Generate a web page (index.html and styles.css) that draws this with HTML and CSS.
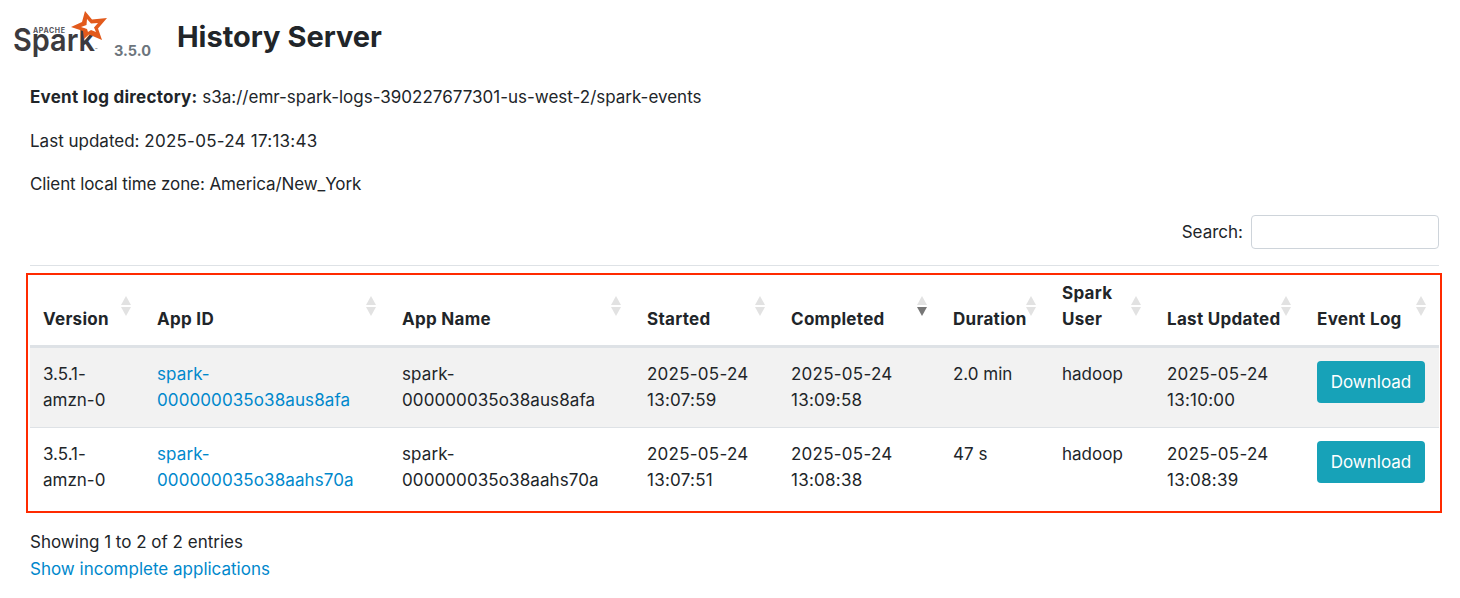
FILE: index.html
```html
<!DOCTYPE html>
<html lang="en">
<head>
<meta charset="utf-8">
<title>History Server</title>
<link rel="stylesheet" href="styles.css">
</head>
<body>
<header class="brand">
  <svg class="logo" viewBox="0 0 112 62" width="112" height="62" aria-label="Apache Spark logo">
    <text class="apache" x="33" y="30" textLength="32">APACHE</text>
    <text class="spark" x="13" y="48" textLength="82" lengthAdjust="spacingAndGlyphs">Spark</text>
    <text class="tm" x="95" y="48">™</text>
    <path class="star" fill-rule="evenodd" transform="translate(0 -3)" d="M85 11 L92 19.5 L107 18 L98 28.5 L102 40 L89 34.5 L84 39 L83 31 L71 27 L82 22 Z M87 19 L86.5 25 L81 27 L87 29 L88 32 L91 30 L96 32 L94 27.5 L98 23 L91 23.5 Z"/>
  </svg>
  <span class="version">3.5.0</span>
  <h1 class="title">History Server</h1>
</header>
<main class="content">
  <p class="info"><strong>Event log directory:</strong> s3a://emr-spark-logs-390227677301-us-west-2/spark-events</p>
  <p class="info">Last updated: <span class="num">2025-05-24 17:13:43</span></p>
  <p class="info tz">Client local time zone: America/New_York</p>
  <div class="search-row">
    <label class="search-label" for="q">Search:</label>
    <input class="search-input" id="q" type="search">
  </div>
  <div class="table-wrap">
    <table class="apps">
      <colgroup>
        <col class="c1"><col class="c2"><col class="c3"><col class="c4"><col class="c5"><col class="c6"><col class="c7"><col class="c8"><col class="c9">
      </colgroup>
      <thead>
        <tr>
          <th>Version<span class="sort"></span></th>
          <th>App ID<span class="sort"></span></th>
          <th>App Name<span class="sort"></span></th>
          <th>Started<span class="sort"></span></th>
          <th>Completed<span class="sort desc"></span></th>
          <th>Duration<span class="sort"></span></th>
          <th>Spark User<span class="sort"></span></th>
          <th>Last Updated<span class="sort"></span></th>
          <th>Event Log<span class="sort"></span></th>
        </tr>
      </thead>
      <tbody>
        <tr class="odd">
          <td>3.5.1-amzn-0</td>
          <td class="id"><a href="#">spark-000000035o38aus8afa</a></td>
          <td class="id">spark-000000035o38aus8afa</td>
          <td class="num">2025-05-24 13:07:59</td>
          <td class="num">2025-05-24 13:09:58</td>
          <td>2.0 min</td>
          <td>hadoop</td>
          <td class="num">2025-05-24 13:10:00</td>
          <td><a class="btn" href="#">Download</a></td>
        </tr>
        <tr>
          <td>3.5.1-amzn-0</td>
          <td class="id"><a href="#">spark-000000035o38aahs70a</a></td>
          <td class="id">spark-000000035o38aahs70a</td>
          <td class="num">2025-05-24 13:07:51</td>
          <td class="num">2025-05-24 13:08:38</td>
          <td>47 s</td>
          <td>hadoop</td>
          <td class="num">2025-05-24 13:08:39</td>
          <td><a class="btn" href="#">Download</a></td>
        </tr>
      </tbody>
    </table>
    <div class="highlight"></div>
  </div>
  <div class="entries">Showing 1 to 2 of 2 entries</div>
  <a class="more" href="#">Show incomplete applications</a>
</main>
</body>
</html>
```
FILE: styles.css
```css
* { box-sizing: border-box; }
html, body { margin: 0; padding: 0; }
body {
  background: #fff;
  color: #212529;
  font-family: Inter, "Liberation Sans", sans-serif;
  font-size: 17px;
  line-height: 26.4px;
  height: 598px;
  overflow: hidden;
}
a { color: #0088cc; text-decoration: none; }
strong { font-weight: 700; letter-spacing: 0.25px; }
.num { letter-spacing: 0.25px; }
.id { letter-spacing: 0.1px; }
.tz { letter-spacing: -0.1px; }
.brand {
  display: flex;
  align-items: flex-start;
  height: 76px;
}
.logo { flex: none; margin-top: 3px; }
.star { fill: #e25a1c; }
.apache { font: 700 7px Inter, sans-serif; fill: #55535a; }
.spark { font: 600 31px Inter, sans-serif; fill: #3c3a3e; }
.tm { font: 400 4px Inter, sans-serif; fill: #3c3a3e; }
.version {
  margin: 39px 0 0 2px;
  font-size: 14.5px;
  line-height: 24px;
  font-weight: 700;
  color: #6c757d;
}
.title {
  margin: 15px 0 0 26px;
  font-size: 29px;
  line-height: 44px;
  font-weight: 700;
}
.content { padding: 8.2px 21px 0 30px; }
.info { margin: 0 0 17px; height: 26.4px; }
.search-row {
  display: flex;
  justify-content: flex-end;
  align-items: center;
  gap: 8px;
  margin-top: 17.6px;
  height: 34px;
}
.search-input {
  width: 188px;
  height: 34px;
  border: 1px solid #ced4da;
  border-radius: 4px;
  background: #fff;
  padding: 0 8px;
  outline: none;
}
.table-wrap {
  position: relative;
  margin-top: 16px;
  border-top: 1px solid #dee2e6;
}
.apps {
  width: 1409px;
  table-layout: fixed;
  border-collapse: collapse;
  margin-top: 8px;
}
.c1 { width: 114px; }
.c2, .c3 { width: 245px; }
.c4 { width: 144px; }
.c5 { width: 162px; }
.c6 { width: 109px; }
.c7 { width: 105px; }
.c8 { width: 150px; }
.c9 { width: 135px; }
th, td {
  text-align: left;
  padding: 13px;
  vertical-align: top;
}
th {
  position: relative;
  vertical-align: bottom;
  font-weight: 700;
  letter-spacing: 0.3px;
  padding: 6px 13px 12px;
  border-bottom: 3px solid #dee2e6;
}
tbody tr + tr td { border-top: 1px solid #dee2e6; }
.odd td { background: #f2f2f2; }
.sort {
  position: absolute;
  right: 13px;
  top: 22px;
  width: 10px;
  height: 20px;
}
.sort::before, .sort::after {
  content: "";
  position: absolute;
  left: 0;
  border-left: 5px solid transparent;
  border-right: 5px solid transparent;
}
.sort::before { top: 0; border-bottom: 9px solid #e2e2e2; }
.sort::after { top: 11px; border-top: 9px solid #e2e2e2; }
.sort.desc::after { border-top-color: #777; }
.btn {
  display: block;
  width: 108px;
  height: 42px;
  line-height: 42px;
  text-align: center;
  letter-spacing: 0;
  background: #17a2b8;
  color: #fff;
  border-radius: 4px;
}
.highlight {
  position: absolute;
  left: -4px;
  right: -3px;
  top: 7px;
  bottom: -7px;
  border: 2px solid #ff2a00;
  pointer-events: none;
}
.entries { margin-top: 23px; }
.more { display: block; }
```
